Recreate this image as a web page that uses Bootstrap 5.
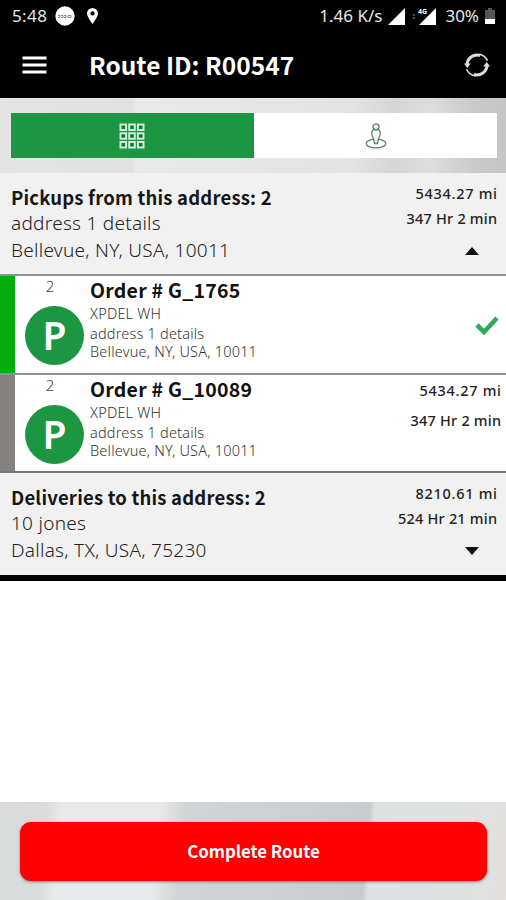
<!DOCTYPE html>
<html lang="en">
<head>
<meta charset="utf-8">
<meta name="viewport" content="width=device-width, initial-scale=1">
<title>Route R00547</title>
<link href="https://cdn.jsdelivr.net/npm/bootstrap@5.3.0/dist/css/bootstrap.min.css" rel="stylesheet">
<style>
body{font-family:"Noto Sans","Open Sans",sans-serif;width:506px;height:900px;overflow:hidden;color:#161616}
svg{display:block;flex:none}
.status-bar{height:32px;padding:0 11px 0 12px;font-size:17px;line-height:32px;color:#e8e8e8}
.clock{letter-spacing:.4px}
.pin-icon{margin-left:12px}
.signal{margin-left:6px}
.app-bar{height:66px;padding:0 16px 0 22px}
.app-title,.group-title,.order-title,.go-btn{font-family:"Noto Sans CJK SC","Noto Sans",sans-serif;font-weight:700}
.app-title{font-size:24.5px;line-height:64px;margin-left:42px;color:#fff}
.tab-band{height:75px;padding:15px 9px 15px 11px;background:linear-gradient(90deg,#e4e4e4 0,#e3e1df 26%,#e9e9e9 27%,#e5e3e1 70%,#d5d5d5 78%,#dcdddd 85%,#c9c9c9 94%,#c5c5c5 100%)}
.tab-item{height:45px;width:243px}
.grid-icon{margin-right:2px}
.green-bg{background:#1c9643}
.group-head{height:101px;padding:11px 9px 0 11px;background:#f1f1f1}
.group-head.last{height:102px}
.group-title{font-size:18.5px;line-height:26px;letter-spacing:.2px}
.group-line{font-size:19px;line-height:26.5px;font-weight:300;color:#222;letter-spacing:.27px}
.measure{font-size:14.5px;font-weight:500;line-height:25px;color:#222}
.group-head .measure{margin-top:-3px}
.distance{font-size:14.5px;letter-spacing:.7px;margin-right:-.7px}
.duration{letter-spacing:.2px;margin-right:-.2px}
.order-row .measure{line-height:30px;padding:0 5px 0 0}
.caret{margin:16px 18px 0 0}
.order-row{height:99px;border-top:2px solid #929292}
.order-row.second{height:100px;border-bottom:2px solid #777}
.state-bar{width:15px}
.state-done{background:#03ad0b}
.state-open{background:#848280}
.badge-col{width:75px;padding:0 0 0 10px}
.count-no{font-size:15px;line-height:21px;font-weight:300;width:50px;color:#444}
.round-p{width:59px;height:59px;margin-top:9px;font-size:39px;font-weight:600;color:#fff}
.order-title{font-size:19.5px;line-height:28px;letter-spacing:.25px;color:#111}
.order-line{font-size:14.5px;font-weight:300;line-height:18px;letter-spacing:.2px;color:#333}
.place{padding-top:2px}
.check{margin:40px 7px 0 0}
.end-bar{height:6px}
.foot{height:98px;padding:20px 19px 19px 20px;background:linear-gradient(95deg,#d9dbda 0,#dadcdb 9%,#e7e9ea 12%,#e8e9ea 31%,#d2d5d5 36%,#c8cccd 72%,#dde1e1 73%,#e0e2e2 94%,#e3e0dd 100%)}
.go-btn,.go-btn:hover{height:59px;border-radius:11px;background:#fe0000;color:#fff;border:0;font-size:16.800px;box-shadow:0 1px 3px #0006}
.t{white-space:nowrap}
</style>
<script src="https://cdn.jsdelivr.net/npm/bootstrap@5.3.0/dist/js/bootstrap.bundle.min.js"></script>
</head>
<body class="d-flex flex-column bg-white">
<header class="bg-black">
  <div class="status-bar d-flex align-items-center">
    <span class="t clock">5:48</span>
    <svg class="ms-2" width="20" height="20" viewBox="0 0 20 20"><circle cx="10" cy="10" r="9.700" fill="#fff"/><path d="M3 9.500h2v2H3m3-2h2v2H6m3-2h2v2H9m4-2h3v2h-3z" fill="none" stroke="#777" stroke-width=".9"/></svg>
    <svg class="pin-icon" width="11" height="16" viewBox="0 0 11 16"><path fill="#fff" fill-rule="evenodd" d="M5.500 0A5.500 5.500 0 0 0 0 5.500C0 9 5.500 16 5.500 16S11 9 11 5.500A5.500 5.500 0 0 0 5.500 0zm0 3.300a2.100 2.100 0 1 1 0 4.200 2.100 2.100 0 0 1 0-4.200z"/></svg>
    <span class="t ms-auto">1.46 K/s</span>
    <svg class="signal" width="17" height="17" viewBox="0 0 17 17"><path d="M17 0v17H0z" fill="#fff"/></svg>
    <svg class="signal" width="26" height="22" viewBox="0 -2 26 22"><path d="M25 1v17H8z" fill="#fff"/><path d="M1.500 8.500 3 6.500l1.500 2zM1.500 10.500 3 12.500l1.500-2z" fill="#777"/><text x="7" y="6.500" font-size="7" font-weight="700" fill="#fff" stroke="#000" stroke-width="1.500" paint-order="stroke">4G</text></svg>
    <span class="t ms-2">30%</span>
    <svg class="signal" width="10" height="17" viewBox="0 0 10 17"><path d="M3 0h4v2h3v9H0V2h3z" fill="#555"/><path d="M0 11h10v5H0z" fill="#fff"/></svg>
  </div>
  <div class="app-bar d-flex align-items-center">
    <svg width="25" height="18" viewBox="0 0 25 18"><path d="M.5 2h24M.5 9h24M.5 16h24" stroke="#fff" stroke-width="2.800"/></svg>
    <span class="app-title t">Route ID: R00547</span>
    <svg class="ms-auto" width="26" height="26" viewBox="0 0 26 26"><g fill="none" stroke="#ddd"><path stroke-width="3" d="M3 13A10 10 0 0 1 16 3.500M23 13A10 10 0 0 1 10 22.500"/><path d="M15 2.300a11 11 0 0 1 8.500 6.500M11 23.700a11 11 0 0 1-8.500-6.500" stroke-width="1.600"/></g><path d="M0 11.500h6.800L3.200 16zM26 14.500h-6.800L22.800 10z" fill="#ddd"/></svg>
  </div>
</header>
<nav class="tab-band d-flex">
  <div class="tab-item green-bg d-flex align-items-center justify-content-center">
    <svg class="grid-icon" width="26" height="26" viewBox="0 0 26 26"><path fill="#0b7a2e" stroke="#d0eed7" stroke-width="2" d="M1.500 1.500h5.600v5.600H1.500zM10.200 1.500h5.600v5.600h-5.600zM18.900 1.500h5.600v5.600h-5.600zM1.500 10.200h5.600v5.600H1.500zM10.200 10.200h5.600v5.600h-5.600zM18.900 10.200h5.600v5.600h-5.600zM1.500 18.900h5.600v5.600H1.500zM10.200 18.900h5.600v5.600h-5.600zM18.900 18.900h5.600v5.600h-5.600z"/></svg>
  </div>
  <div class="tab-item bg-white d-flex align-items-center justify-content-center">
    <svg width="22" height="26" viewBox="0 0 22 26" fill="none" stroke="#5f8069" stroke-width="1.300"><ellipse cx="11" cy="20.500" rx="9.800" ry="4.300"/><path fill="#fff" d="M8 6.500C6.300 8 6.300 12 8.300 15L9.500 20.500h3L13.700 15c2-3 2-7 .3-8.500z"/><circle cx="11" cy="3.800" r="3"/></svg>
  </div>
</nav>
<main class="flex-grow-1">
  <section class="group-head d-flex justify-content-between">
    <div class="t"><div class="group-title">Pickups from this address: 2</div><div class="group-line">address 1 details</div><div class="group-line">Bellevue, NY, USA, 10011</div></div>
    <div class="measure t d-flex flex-column align-items-end"><span class="distance">5434.27 mi</span><span class="duration">347 Hr 2 min</span><svg class="caret" width="14" height="8" viewBox="0 0 14 8"><path d="M7 0l7 8H0z" fill="#111"/></svg></div>
  </section>
  <article class="order-row d-flex">
    <div class="state-bar state-done"></div>
    <div class="badge-col"><div class="count-no text-center">2</div><div class="round-p green-bg rounded-circle d-flex align-items-center justify-content-center">P</div></div>
    <div class="t flex-grow-1"><div class="order-title">Order # G_1765</div><div class="order-line">XPDEL WH</div><div class="order-line place">address 1 details</div><div class="order-line">Bellevue, NY, USA, 10011</div></div>
    <svg class="check" width="24" height="19" viewBox="0 0 24 19"><path d="M2 9l7 7L22 2" fill="none" stroke="#2dab58" stroke-width="4.600"/></svg>
  </article>
  <article class="order-row second d-flex">
    <div class="state-bar state-open"></div>
    <div class="badge-col"><div class="count-no text-center">2</div><div class="round-p green-bg rounded-circle d-flex align-items-center justify-content-center">P</div></div>
    <div class="t flex-grow-1"><div class="order-title">Order # G_10089</div><div class="order-line">XPDEL WH</div><div class="order-line place">address 1 details</div><div class="order-line">Bellevue, NY, USA, 10011</div></div>
    <div class="measure t d-flex flex-column align-items-end"><span class="distance">5434.27 mi</span><span class="duration">347 Hr 2 min</span></div>
  </article>
  <section class="group-head last d-flex justify-content-between">
    <div class="t"><div class="group-title">Deliveries to this address: 2</div><div class="group-line">10 jones</div><div class="group-line">Dallas, TX, USA, 75230</div></div>
    <div class="measure t d-flex flex-column align-items-end"><span class="distance">8210.61 mi</span><span class="duration">524 Hr 21 min</span><svg class="caret" width="14" height="8" viewBox="0 0 14 8"><path d="M7 8l7-8H0z" fill="#111"/></svg></div>
  </section>
  <div class="bg-black end-bar"></div>
</main>
<footer class="foot"><button class="btn go-btn w-100">Complete Route</button></footer>
</body>
</html>
